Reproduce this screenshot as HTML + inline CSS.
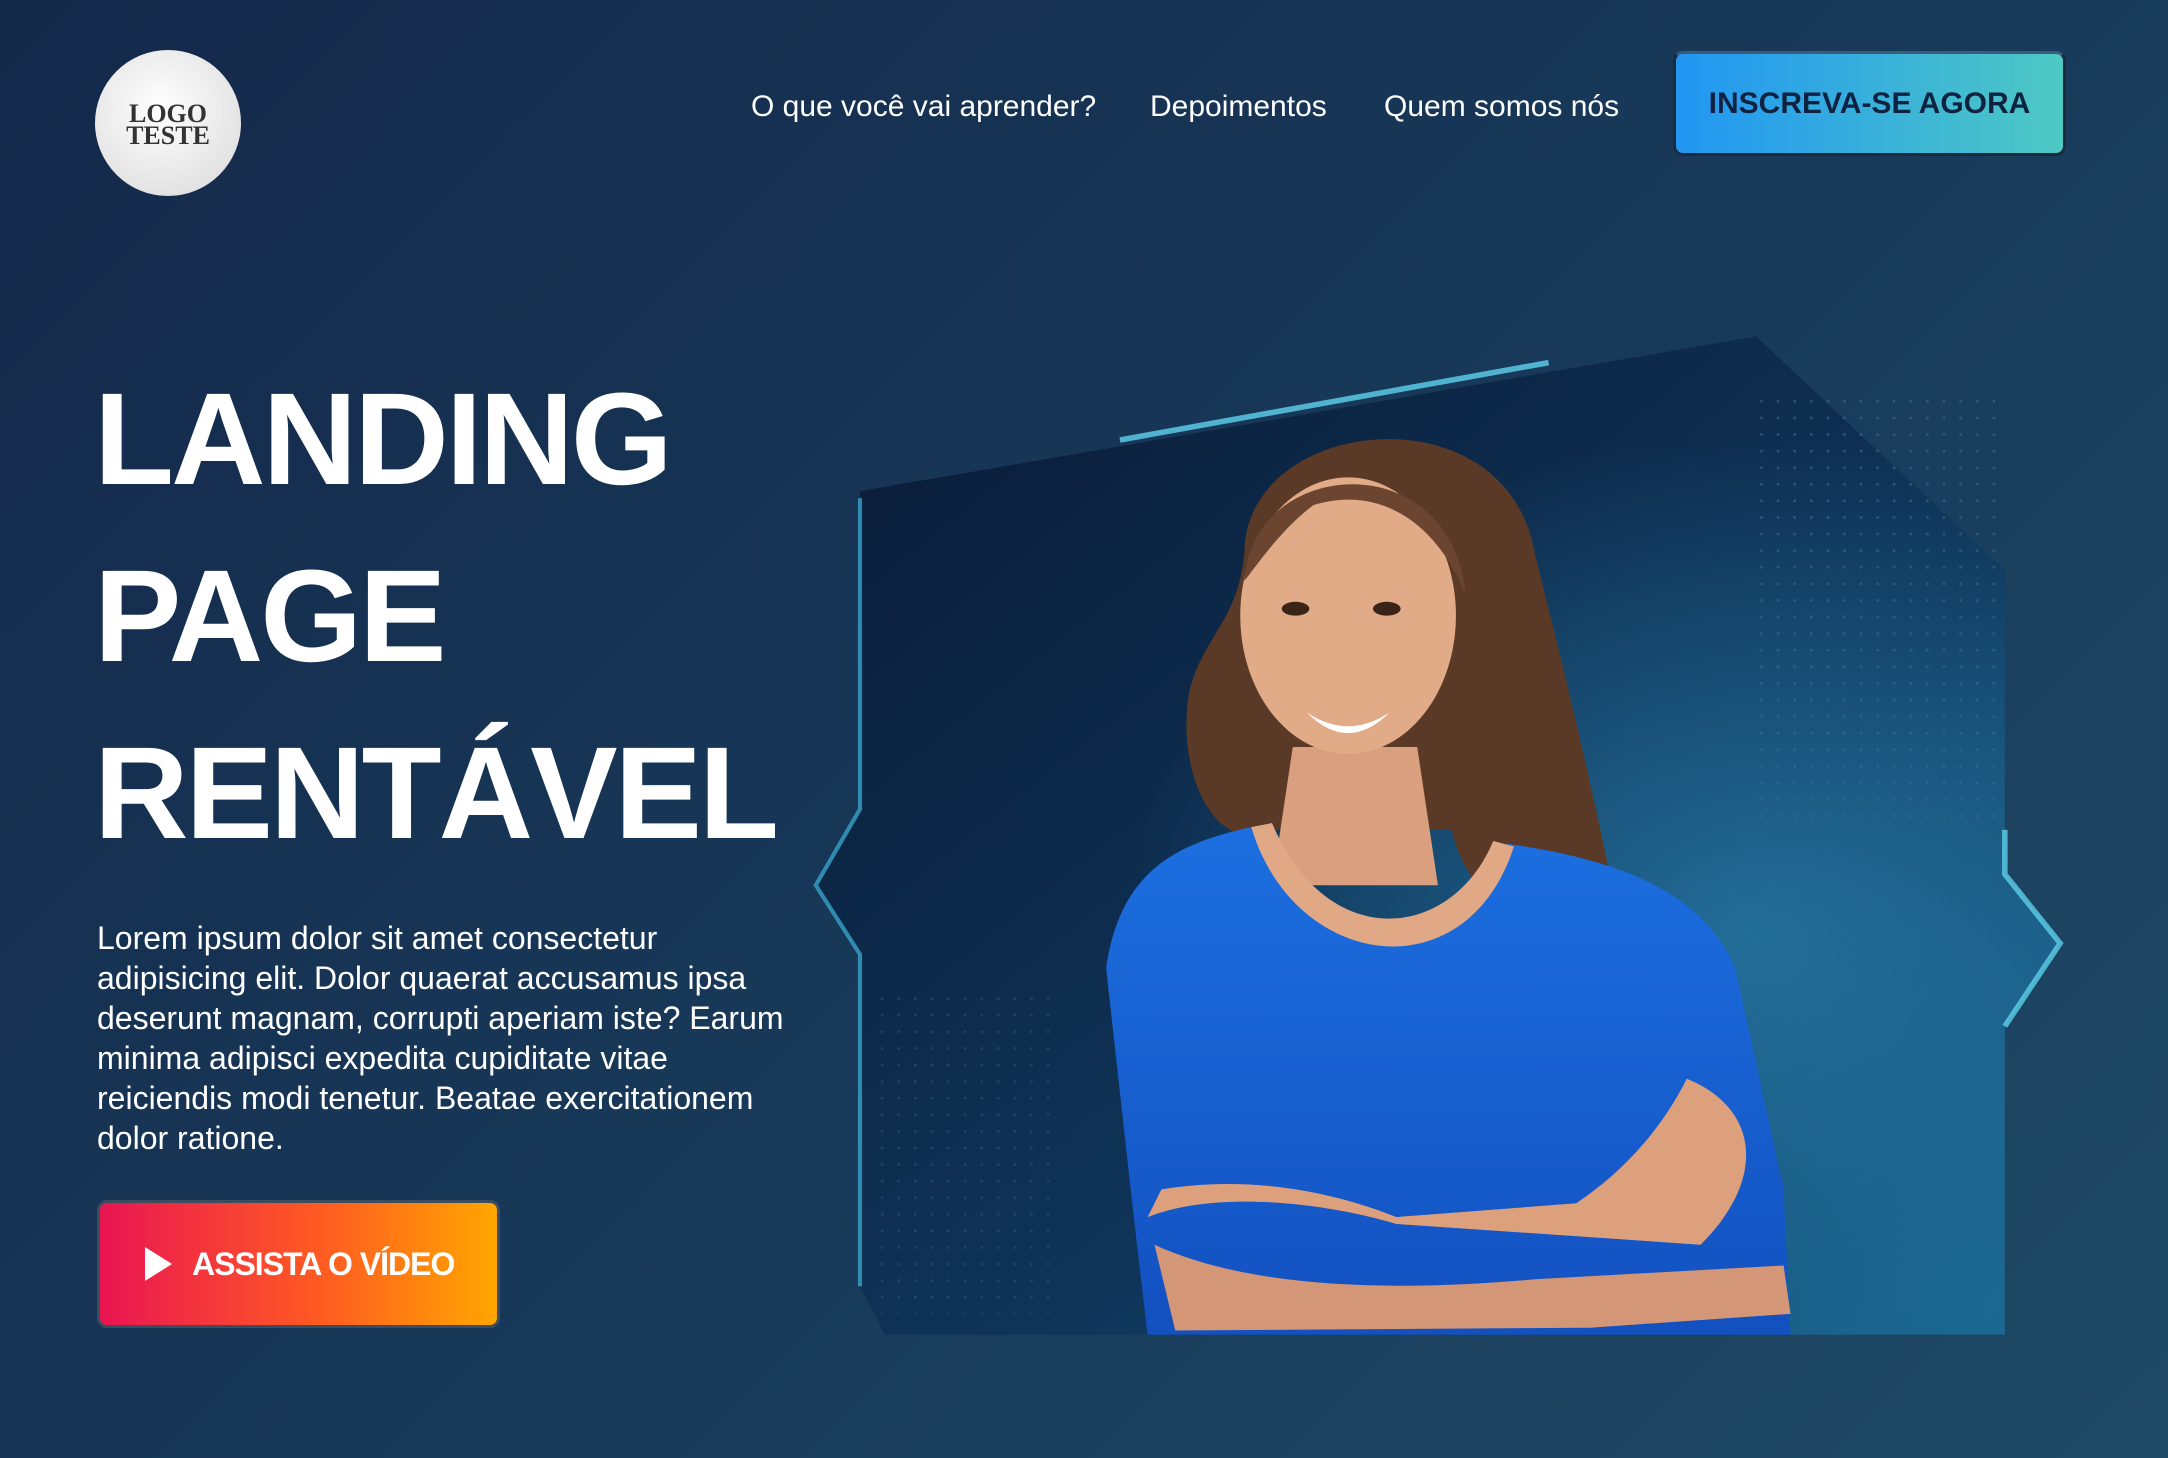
<!DOCTYPE html>
<html><head><meta charset="utf-8"><style>
*{margin:0;padding:0;box-sizing:border-box}
body{width:2168px;height:1458px;overflow:hidden;font-family:"Liberation Sans",sans-serif;background:linear-gradient(135deg,#14284a 0%,#183a5a 55%,#1f4a66 100%);position:relative;color:#fff}
svg.bg{position:absolute;left:0;top:0}
.logo{position:absolute;left:95px;top:50px;width:146px;height:146px;border-radius:50%;background:radial-gradient(circle at 45% 40%,#fff,#d8d8d8);display:flex;flex-direction:column;align-items:center;justify-content:center;font-family:"Liberation Serif",serif;font-weight:bold;color:#333;font-size:26px;line-height:22px;padding-top:4px}
.nav{position:absolute;top:90px;font-size:30px;color:#fff}
.cta{position:absolute;left:1673px;top:51px;width:393px;height:105px;border-radius:10px;background:linear-gradient(90deg,#2196f3,#4ec9c4);border:3px solid #1b2b3c;border-top-color:#3b5b7b;display:flex;align-items:center;justify-content:center;font-weight:bold;font-size:30px;color:#0f2240}
h1{position:absolute;left:94px;top:350px;font-size:131px;line-height:177px;font-weight:bold;letter-spacing:-3px}
p{position:absolute;left:97px;top:918px;width:700px;font-size:32px;line-height:40px}
.vid{position:absolute;left:97px;top:1200px;width:403px;height:128px;border-radius:10px;background:linear-gradient(90deg,#e91553,#ff5a22 55%,#ffa600);border:3px solid #3c4d60;display:flex;align-items:center;padding-left:45px;font-weight:bold;font-size:32px;letter-spacing:-1px}
.vid i{width:0;height:0;border-left:27px solid #fff;border-top:17px solid transparent;border-bottom:17px solid transparent;margin-right:20px}
</style></head><body>
<svg class="bg" width="2168" height="1458" viewBox="0 0 1568 1054">
<defs>
<linearGradient id="pn" x1="0" y1="0" x2="1" y2="1"><stop offset="0" stop-color="#0a1a36"/><stop offset="0.6" stop-color="#0f3559"/><stop offset="1" stop-color="#1a6a94"/></linearGradient>
<radialGradient id="glow" cx="0.75" cy="0.6" r="0.5"><stop offset="0" stop-color="#2a82b0" stop-opacity="0.7"/><stop offset="1" stop-color="#2a82b0" stop-opacity="0"/></radialGradient>
<linearGradient id="shirt" x1="0" y1="0" x2="0" y2="1"><stop offset="0" stop-color="#1c6fe0"/><stop offset="1" stop-color="#1350c0"/></linearGradient>
<pattern id="dots" width="12" height="12" patternUnits="userSpaceOnUse"><circle cx="2" cy="2" r="1" fill="#3a6d90" opacity="0.6"/></pattern>
</defs>
<path d="M622 355 L1270 243 L1450 412 L1450 632 L1490 682 L1450 742 L1450 965 L640 965 L622 930 L622 690 L590 640 L622 585 Z" fill="url(#pn)"/>
<path d="M622 355 L1270 243 L1450 412 L1450 632 L1490 682 L1450 742 L1450 965 L640 965 L622 930 L622 690 L590 640 L622 585 Z" fill="url(#glow)"/>
<rect x="1270" y="280" width="175" height="320" fill="url(#dots)"/>
<rect x="630" y="720" width="130" height="230" fill="url(#dots)" opacity="0.6"/>
<path d="M810 318 L1120 262" stroke="#5fd3ef" stroke-width="4" opacity="0.8"/>
<path d="M622 360 L622 585 L590 640 L622 690 L622 930" stroke="#3fb0d8" stroke-width="3" fill="none" opacity="0.7"/>
<path d="M1450 600 L1450 632 L1490 682 L1450 742" stroke="#5cd0ea" stroke-width="4" fill="none" opacity="0.8"/>
<path d="M900 400 C900 300 1090 280 1110 400 C1130 480 1150 560 1170 660 C1120 700 1060 650 1050 600 L920 600 C880 620 850 560 860 500 C870 460 895 450 900 400Z" fill="#5a3a26"/>
<path d="M935 540 L1025 540 L1040 640 L920 640Z" fill="#d99f7e"/>
<path d="M800 700 C810 630 850 610 905 598 C930 680 1030 700 1090 610 C1160 620 1230 640 1255 700 L1290 860 L1295 965 L830 965 L820 880Z" fill="url(#shirt)"/>
<path d="M905 598 C935 700 1060 720 1095 612 L1080 608 C1050 680 960 690 920 595Z" fill="#e1a886"/>
<path d="M830 880 C880 860 960 870 1010 885 L1230 900 C1280 850 1270 800 1220 780 C1200 820 1170 850 1140 870 L1010 880 C960 860 900 850 840 860Z" fill="#dca07c"/>
<path d="M835 900 C900 930 1000 935 1110 925 L1290 915 L1295 950 L1150 960 L850 962Z" fill="#d39676"/>
<ellipse cx="975" cy="445" rx="78" ry="100" fill="#e2ab88"/>
<path d="M900 420 C905 330 1050 320 1060 430 C1040 380 1000 350 950 365 C930 380 915 400 900 420Z" fill="#6b4530"/>
<path d="M945 515 Q975 535 1005 515 Q975 545 945 515Z" fill="#fff"/>
<ellipse cx="937" cy="440" rx="10" ry="5" fill="#3a2418"/>
<ellipse cx="1003" cy="440" rx="10" ry="5" fill="#3a2418"/>
</svg>
<div class="logo"><span>LOGO</span><span>TESTE</span></div>
<div class="nav" style="left:751px">O que você vai aprender?</div>
<div class="nav" style="left:1150px">Depoimentos</div>
<div class="nav" style="left:1384px">Quem somos nós</div>
<div class="cta">INSCREVA-SE AGORA</div>
<h1>LANDING<br>PAGE<br>RENTÁVEL</h1>
<p>Lorem ipsum dolor sit amet consectetur adipisicing elit. Dolor quaerat accusamus ipsa deserunt magnam, corrupti aperiam iste? Earum minima adipisci expedita cupiditate vitae reiciendis modi tenetur. Beatae exercitationem dolor ratione.</p>
<div class="vid"><i></i>ASSISTA O VÍDEO</div>
</body></html>
